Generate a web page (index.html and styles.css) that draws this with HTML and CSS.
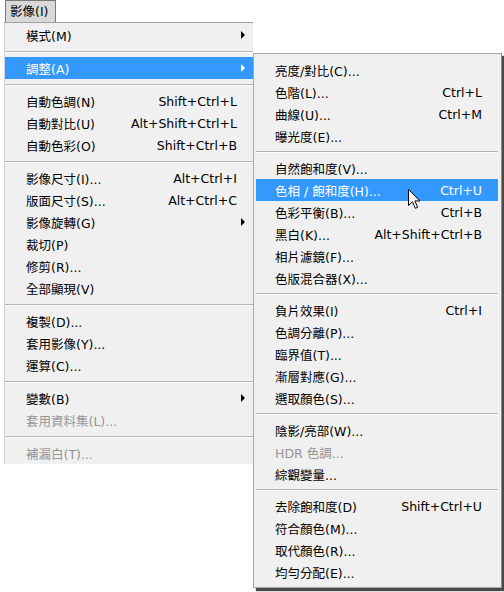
FILE: index.html
```html
<!DOCTYPE html>
<html lang="zh-Hant">

<head>
    <meta charset="UTF-8">
    <title>影像選單</title>
    <link rel="stylesheet" href="styles.css">
</head>

<body>
    <div class="screen">
        <div class="tab">影像(I)</div>

        <div class="menus">
            <!-- main image menu -->
            <div class="menu main">
                <div class="item has-sub"><span class="label">模式(M)</span><span class="key"></span><span class="more"></span></div>
                <div class="sep"></div>
                <div class="item has-sub active"><span class="label">調整(A)</span><span class="key"></span><span class="more"></span></div>
                <div class="sep"></div>
                <div class="item"><span class="label">自動色調(N)</span><span class="key">Shift+Ctrl+L</span><span class="more"></span></div>
                <div class="item"><span class="label">自動對比(U)</span><span class="key">Alt+Shift+Ctrl+L</span><span class="more"></span></div>
                <div class="item"><span class="label">自動色彩(O)</span><span class="key">Shift+Ctrl+B</span><span class="more"></span></div>
                <div class="sep"></div>
                <div class="item"><span class="label">影像尺寸(I)...</span><span class="key">Alt+Ctrl+I</span><span class="more"></span></div>
                <div class="item"><span class="label">版面尺寸(S)...</span><span class="key">Alt+Ctrl+C</span><span class="more"></span></div>
                <div class="item has-sub"><span class="label">影像旋轉(G)</span><span class="key"></span><span class="more"></span></div>
                <div class="item"><span class="label">裁切(P)</span><span class="key"></span><span class="more"></span></div>
                <div class="item"><span class="label">修剪(R)...</span><span class="key"></span><span class="more"></span></div>
                <div class="item"><span class="label">全部顯現(V)</span><span class="key"></span><span class="more"></span></div>
                <div class="sep"></div>
                <div class="item"><span class="label">複製(D)...</span><span class="key"></span><span class="more"></span></div>
                <div class="item"><span class="label">套用影像(Y)...</span><span class="key"></span><span class="more"></span></div>
                <div class="item"><span class="label">運算(C)...</span><span class="key"></span><span class="more"></span></div>
                <div class="sep"></div>
                <div class="item has-sub"><span class="label">變數(B)</span><span class="key"></span><span class="more"></span></div>
                <div class="item disabled"><span class="label">套用資料集(L)...</span><span class="key"></span><span class="more"></span></div>
                <div class="sep"></div>
                <div class="item disabled"><span class="label">補漏白(T)...</span><span class="key"></span><span class="more"></span></div>
            </div>

            <!-- adjustments submenu -->
            <div class="menu sub">
                <div class="item"><span class="label">亮度/對比(C)...</span><span class="key"></span><span class="more"></span></div>
                <div class="item"><span class="label">色階(L)...</span><span class="key">Ctrl+L</span><span class="more"></span></div>
                <div class="item"><span class="label">曲線(U)...</span><span class="key">Ctrl+M</span><span class="more"></span></div>
                <div class="item"><span class="label">曝光度(E)...</span><span class="key"></span><span class="more"></span></div>
                <div class="sep"></div>
                <div class="item"><span class="label">自然飽和度(V)...</span><span class="key"></span><span class="more"></span></div>
                <div class="item active"><span class="label">色相 / 飽和度(H)...</span><span class="key">Ctrl+U</span><span class="more"></span></div>
                <div class="item"><span class="label">色彩平衡(B)...</span><span class="key">Ctrl+B</span><span class="more"></span></div>
                <div class="item"><span class="label">黑白(K)...</span><span class="key">Alt+Shift+Ctrl+B</span><span class="more"></span></div>
                <div class="item"><span class="label">相片濾鏡(F)...</span><span class="key"></span><span class="more"></span></div>
                <div class="item"><span class="label">色版混合器(X)...</span><span class="key"></span><span class="more"></span></div>
                <div class="sep"></div>
                <div class="item"><span class="label">負片效果(I)</span><span class="key">Ctrl+I</span><span class="more"></span></div>
                <div class="item"><span class="label">色調分離(P)...</span><span class="key"></span><span class="more"></span></div>
                <div class="item"><span class="label">臨界值(T)...</span><span class="key"></span><span class="more"></span></div>
                <div class="item"><span class="label">漸層對應(G)...</span><span class="key"></span><span class="more"></span></div>
                <div class="item"><span class="label">選取顏色(S)...</span><span class="key"></span><span class="more"></span></div>
                <div class="sep"></div>
                <div class="item"><span class="label">陰影/亮部(W)...</span><span class="key"></span><span class="more"></span></div>
                <div class="item disabled"><span class="label">HDR 色調...</span><span class="key"></span><span class="more"></span></div>
                <div class="item"><span class="label">綜觀變量...</span><span class="key"></span><span class="more"></span></div>
                <div class="sep"></div>
                <div class="item"><span class="label">去除飽和度(D)</span><span class="key">Shift+Ctrl+U</span><span class="more"></span></div>
                <div class="item"><span class="label">符合顏色(M)...</span><span class="key"></span><span class="more"></span></div>
                <div class="item"><span class="label">取代顏色(R)...</span><span class="key"></span><span class="more"></span></div>
                <div class="item"><span class="label">均勻分配(E)...</span><span class="key"></span><span class="more"></span></div>
            </div>
        </div>

        <!-- mouse pointer over the hovered item -->
        <svg class="pointer" width="14" height="22" viewBox="0 0 14 22">
            <path d="M0.5 0.5 L0.5 16.5 L4.5 12.8 L7.3 19.3 L9.6 18.3 L6.9 11.9 L12 11.9 Z" fill="#fff" stroke="#000" stroke-width="1" stroke-linejoin="miter"/>
        </svg>
    </div>
</body>

</html>
```

FILE: styles.css
```css
body {
    margin: 0;
    background: #fff;
    font-family: "DejaVu Sans", "Noto Sans CJK TC", sans-serif;
    font-size: 12.5px;
    color: #000;
}

.screen {
    position: relative;
    width: 504px;
    height: 592px;
    overflow: hidden;
}

/* menu bar tab */
.tab {
    box-sizing: border-box;
    width: 51px;
    height: 22px;
    margin-left: 5px;
    padding-left: 4px;
    line-height: 21px;
    border: 1px solid #7a7a7a;
    border-bottom: none;
    background: #d9d9d9;
}

.menus {
    display: flex;
    align-items: flex-start;
}

.menu {
    box-sizing: border-box;
    background: #f0f0f0;
}

.main {
    width: 249px;
    margin-left: 4px;
    padding-top: 1px;
    border-top: 1px solid #a0a0a0;
    border-left: 1px solid #cfcfcf;
}

.sub {
    width: 249px;
    margin-top: 31px;
    padding: 5px 0 4px;
    border: 1px solid #a7a7a7;
    border-right-color: #8a8a8a;
    box-shadow: 3px 3px 1px #4a4a4a;
}

/* rows */
.item {
    display: flex;
    align-items: center;
    height: 22px;
    white-space: nowrap;
}

.main .item {
    padding: 0 5px 0 21px;
}

.sub .item {
    margin: 0 3px 0 2px;
    padding: 0 5px 0 19px;
}

.item .label {
    flex: 1;
}

.item .more {
    width: 10px;
    height: 22px;
    display: flex;
    align-items: center;
    justify-content: center;
    padding-left: 1px;
}

.has-sub .more::after {
    content: "";
    border-left: 4px solid currentColor;
    border-top: 4px solid transparent;
    border-bottom: 4px solid transparent;
}

.item.active {
    background: #3399ff;
    color: #fff;
}

.item.disabled {
    color: #959595;
}

/* separators */
.sep {
    height: 0;
    border-top: 1px solid #b4b4b4;
    border-bottom: 1px solid #fff;
}

.main .sep {
    margin: 5px 0 4px;
}

.sub .sep {
    margin: 4px 3px 4px 2px;
}

.pointer {
    position: absolute;
    left: 408px;
    top: 189px;
}
```
